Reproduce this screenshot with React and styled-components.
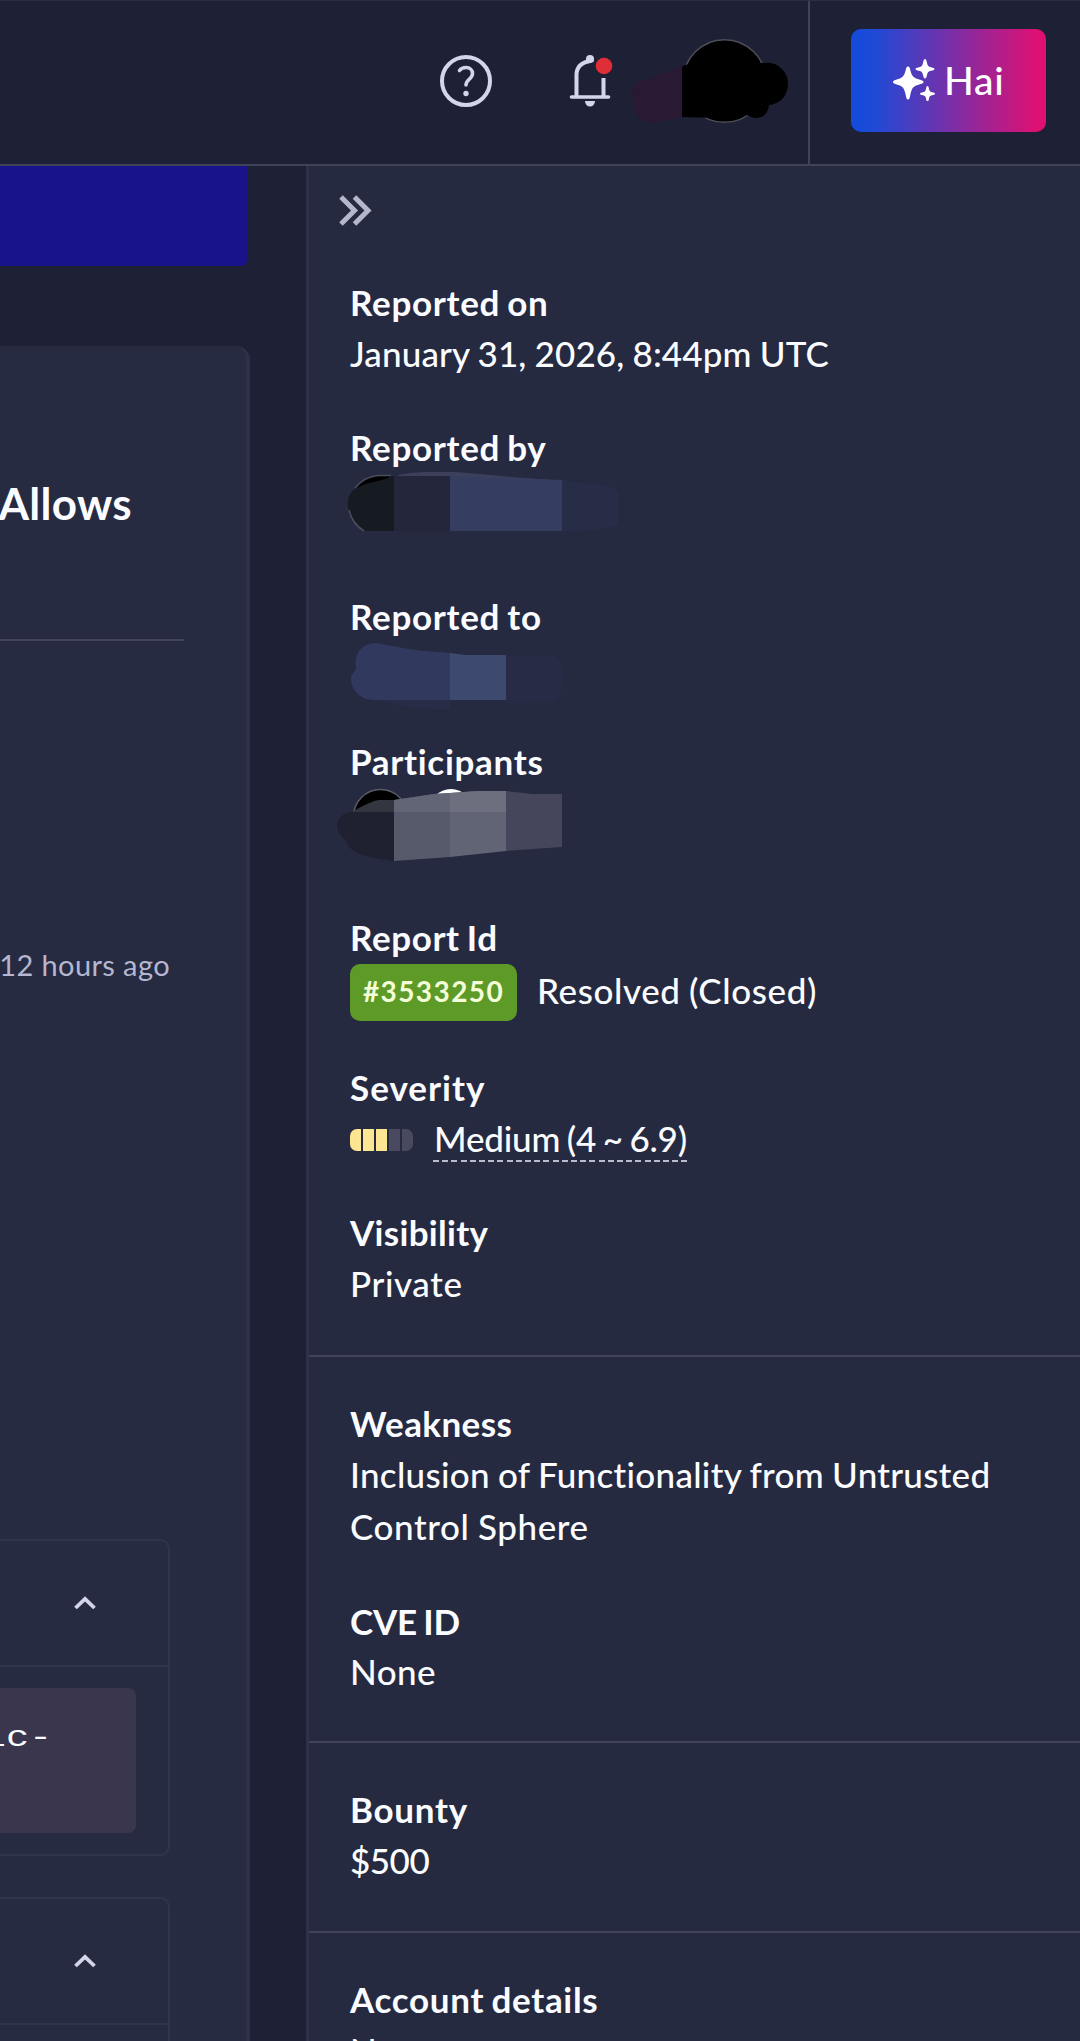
import React from 'react'
import styled, { createGlobalStyle } from 'styled-components'

export default function App() {
  return (
    <Page>
      <GlobalStyle />
      <Header>
        <HeaderIcons>
          <HelpIcon />
          <BellIcon />
          <HiddenAvatar />
        </HeaderIcons>
        <HaiWrap>
          <HaiButton>
            <Sparkles />
            <HaiLabel>Hai</HaiLabel>
          </HaiButton>
        </HaiWrap>
      </Header>
      <Body>
        <Main>
          <Banner />
          <Card>
            <Title>Allows</Title>
            <Rule />
            <Timestamp>12 hours ago</Timestamp>
            <Box>
              <BoxHeader><Caret /></BoxHeader>
              <BoxBody>
                <CodeBlock><Code>ic-</Code></CodeBlock>
              </BoxBody>
            </Box>
            <Box>
              <BoxHeader><Caret /></BoxHeader>
              <BoxBody />
            </Box>
          </Card>
        </Main>
        <Sidebar>
          <Toggle><DoubleChevron /></Toggle>
          <Section>
            <Field>
              <Label>Reported on</Label>
              <Value $ls="0.15px">January 31, 2026, 8:44pm UTC</Value>
            </Field>
            <Field $h="169px">
              <Label>Reported by</Label>
              <ReporterMask />
            </Field>
            <Field>
              <Label>Reported to</Label>
              <ProgramMask />
            </Field>
            <Field $h="176px">
              <Label>Participants</Label>
              <ParticipantsMask />
            </Field>
            <Field $h="150px">
              <Label $ls="0.6px">Report Id</Label>
              <Row>
                <Badge>#3533250</Badge>
                <Value $lh="48px">Resolved (Closed)</Value>
              </Row>
            </Field>
            <Field>
              <Label $ls="1px">Severity</Label>
              <Row>
                <Meter>
                  <Segment $on />
                  <Segment $on />
                  <Segment $on />
                  <Segment />
                  <Segment />
                </Meter>
                <Rating>Medium (4 ~ 6.9)</Rating>
              </Row>
            </Field>
            <Field>
              <Label $ls="0.3px">Visibility</Label>
              <Value>Private</Value>
            </Field>
          </Section>
          <Section>
            <Field $h="198px">
              <Label $ls="0.4px">Weakness</Label>
              <Value $ls="0.3px">Inclusion of Functionality from Untrusted</Value>
              <Value>Control Sphere</Value>
            </Field>
            <Field>
              <Label $ls="-0.2px">CVE ID</Label>
              <Value $ls="0.4px" $lh="50px">None</Value>
            </Field>
          </Section>
          <Section>
            <Field $h="147px">
              <Label>Bounty</Label>
              <Value $ls="-0.5px">$500</Value>
            </Field>
          </Section>
          <Section>
            <Field>
              <Label $ls="0.7px">Account details</Label>
              <Value>None</Value>
            </Field>
          </Section>
        </Sidebar>
      </Body>
    </Page>
  )
}

const HelpIcon = () => (
  <svg width="52" height="52" viewBox="0 0 52 52" fill="none" stroke="#d3d6ea" strokeWidth="4" strokeLinecap="round">
    <circle cx="26" cy="26" r="24" />
    <path d="M19.500 15.500C21 13.500 23.500 12.500 26 12.500C30 12.500 32.500 15 32.500 18.500C32.500 24 26 24.500 26 30" strokeWidth="3.600" />
    <circle cx="26" cy="38.500" r="2.700" fill="#d3d6ea" stroke="none" />
  </svg>
)

const BellIcon = () => (
  <svg width="46" height="54" viewBox="0 0 46 54" fill="none" stroke="#d3d6ea" strokeWidth="4" strokeLinecap="round">
    <circle cx="21" cy="5" r="4" fill="#d3d6ea" stroke="none" />
    <path d="M21 7C12.500 8.500 7.500 13.500 7.500 21V42" />
    <path d="M21 4V8" strokeWidth="7" strokeLinecap="butt" />
    <path d="M34.500 24V42" strokeLinecap="butt" />
    <path d="M2.500 43H39.500" strokeWidth="3.600" />
    <path d="M16 47H26A5 5.500 0 0 1 16 47Z" fill="#d3d6ea" stroke="none" />
    <circle cx="35" cy="12" r="8.300" fill="#e02e38" stroke="none" />
  </svg>
)

const HiddenAvatar = () => (
  <svg width="158" height="86" viewBox="0 0 158 86">
    <path d="M2 52C2 46 8 44 16 42L52 28V79L20 85C8 85 2 70 2 52Z" fill="#2a1933" />
    <circle cx="94.500" cy="43" r="41.300" fill="#000" stroke="#4c4d57" strokeWidth="1.500" />
    <path d="M52 29C55 26 58 27 62 25H135C146 23 158 33 158 45C158 57 151 66 139 67C138 76 132 80 127 80C121 80 117 76 112 76L90 80L52 79Z" fill="#000" />
  </svg>
)

const Sparkles = () => (
  <svg width="42" height="42" viewBox="0 0 42 42" fill="#fff">
    <path d="M15 7.500C16.500 7.500 16.800 9 17.400 11.500C19 17.500 20.500 19 27 20.700C29.500 21.300 30.500 21.800 30.500 23C30.500 24.200 29.500 24.700 27 25.300C20.500 27 19 28.500 17.400 35.500C16.800 38.500 16.500 40.500 15 40.500C13.500 40.500 13.200 38.500 12.600 35.500C11 28.500 9.500 27 3 25.300C1 24.700 0 24.200 0 23C0 21.800 1 21.300 3 20.700C9.500 19 11 17.500 12.600 11.500C13.200 9 13.500 7.500 15 7.500Z" />
    <path d="M32 0C33 0 33.500 1.500 34 4C34.600 6.800 35.500 7.600 38 8.200C40.500 8.800 41.500 9 41.500 10C41.500 11 40.500 11.200 38 11.800C35.500 12.400 34.600 13.200 34 16C33.500 18.500 33 19.500 32 19.500C31 19.500 30.500 18.500 30 16C29.400 13.200 28.500 12.400 26 11.800C23.500 11.200 22.500 11 22.500 10C22.500 9 23.500 8.800 26 8.200C28.500 7.600 29.400 6.800 30 4C30.500 1.500 31 0 32 0Z" />
    <path d="M34.500 27C35.500 27 35.700 28.500 36 30C36.500 32.200 37 32.700 39 33.200C40.800 33.600 42 33.800 42 34.700C42 35.600 40.800 35.800 39 36.200C37 36.700 36.500 37.200 36 39.400C35.700 41 35.500 42 34.500 42C33.500 42 33.300 41 33 39.400C32.500 37.200 32 36.700 30 36.200C28.200 35.800 27 35.600 27 34.700C27 33.800 28.200 33.600 30 33.200C32 32.700 32.500 32.200 33 30C33.300 28.500 33.500 27 34.500 27Z" />
  </svg>
)

const DoubleChevron = () => (
  <svg width="36" height="34" viewBox="0 0 36 34" fill="none" stroke="#b5b8cb" strokeWidth="5">
    <path d="M3 3L16.500 16.500L3 30" />
    <path d="M16.500 3L30 16.500L16.500 30" />
  </svg>
)

const Caret = () => (
  <svg width="22" height="14" viewBox="0 0 22 14" fill="none" stroke="#d3d6ea" strokeWidth="3.800">
    <path d="M1.500 12L11 2.800L20.500 12" />
  </svg>
)

const ReporterMask = () => (
  <Mask width="290" height="64" viewBox="0 4 290 64">
    <path d="M62 7C80 3 115 3 132 5L176 9L230 13V14H62Z" fill="#3c405a" />
    <path d="M57 8H114V63H57Z" fill="#24273b" />
    <path d="M114 8L174 10L226 12V63H114Z" fill="#353d61" />
    <path d="M226 13L264 16C274 19 283 22 283 24V58L250 63H226Z" fill="#272d47" />
    <path d="M58 8H42C30 9 24 14 19 21C13 25 12 30 12 36C12 44 14 52 27 63H58Z" fill="#161a21" />
    <path d="M54 8C40 7 28 11 21 20C33 13 45 14 54 9Z" fill="#000" />
    <path d="M55 7.500H42C30 8.500 24 14 19 20M13 42C15 51 20 58 28 63" fill="none" stroke="#4c4e5c" strokeWidth="1.500" />
  </Mask>
)

const ProgramMask = () => (
  <Mask width="240" height="72" viewBox="0 -2 240 72">
    <path d="M36 56H114V66C85 68 60 62 36 56Z" fill="#272d46" />
    <path d="M170 13H220C230 20 230 50 218 58L170 60Z" fill="#272b45" />
    <path d="M20 24C18 8 28 0 41 0C56 3 75 7 90 8L114 10V57H38C24 57 15 46 15 36C15 30 20 29 20 24Z" fill="#313a5e" />
    <path d="M114 10L130 12H170V57H114Z" fill="#3d496f" />
  </Mask>
)

const ParticipantsMask = () => (
  <Mask width="240" height="76" viewBox="0 -1 240 76">
    <circle cx="44.500" cy="29.500" r="27" fill="#000" stroke="#5a5b66" strokeWidth="1.500" />
    <circle cx="115" cy="24" r="22" fill="#fff" />
    <path d="M16 25C28 18 36 14 43 13H58V27H16Z" fill="#33353f" />
    <path d="M58 25H15C6 26 1 32 1 39C1 46 6 49 10 54C14 68 36 71 58 74Z" fill="#1f2130" />
    <path d="M58 13L98 7L114 6V70L58 74Z" fill="#565a6b" />
    <path d="M114 6L142 4H170V64L114 70Z" fill="#616475" />
    <path d="M58 13L98 7L114 6V25H58Z" fill="#626575" />
    <path d="M114 6L142 4H170V25H114Z" fill="#6d6f7e" />
    <path d="M170 4L196 7H226V60L170 64Z" fill="#45465c" />
  </Mask>
)

const GlobalStyle = createGlobalStyle`
body{
margin:0;
background:#1e2036;
color:#fbfcff;
font-family:Lato, "Open Sans", sans-serif;
}
*{
box-sizing:border-box;
}
svg{
display:block;
flex-shrink:0;
}
`;

const Page = styled.div`
width:1080px;
height:2041px;
overflow:hidden;
display:flex;
flex-direction:column;
`;

const Header = styled.header`
height:166px;
flex-shrink:0;
display:flex;
justify-content:flex-end;
border-top:1px solid #2d2f40;
border-bottom:2px solid #3f4259;
`;

const HeaderIcons = styled.div`
display:flex;
align-items:center;
padding:0 20px 4px 0;

svg:nth-child(1){
margin-right:77px;
}
svg:nth-child(2){
margin-right:15px;
}
`;

const HaiWrap = styled.div`
width:272px;
padding:28px 0 0 41px;
border-left:2px solid #3f4259;
`;

const HaiButton = styled.button`
width:195px;
height:103px;
display:flex;
align-items:center;
padding:0 0 1px 42px;
border:0;
border-radius:10px;
color:#fff;
font-family:inherit;
background:linear-gradient(90deg, #124bdb 0%, #1f4ad6 12%, #df1072 96%);
`;

const HaiLabel = styled.span`
margin-left:9px;
font-size:39px;
line-height:46px;
font-weight:500;
letter-spacing:0.800px;
`;

const Body = styled.div`
flex:1;
min-height:0;
display:flex;
`;

const Main = styled.main`
width:306px;
overflow:hidden;
`;

const Banner = styled.div`
width:247px;
height:100px;
margin-bottom:80px;
border-radius:0 0 6px 0;
background:#18128a;
`;

const Card = styled.section`
width:250px;
height:1800px;
padding-top:131px;
border-right:4px solid #2d3048;
border-radius:0 14px 0 0;
background:#262b42;
`;

const Title = styled.h1`
width:132px;
margin:0;
display:flex;
justify-content:flex-end;
font-size:44px;
line-height:52px;
font-weight:700;
letter-spacing:0.300px;
`;

const Rule = styled.div`
width:184px;
height:2px;
margin:110px 0 306px;
background:#42455d;
`;

const Timestamp = styled.div`
width:170px;
margin-bottom:556px;
display:flex;
justify-content:flex-end;
white-space:nowrap;
font-size:29px;
line-height:36px;
letter-spacing:0.400px;
color:#b4b7cf;
`;

const Box = styled.div`
width:170px;
margin-bottom:41px;
border:2px solid #31354c;
border-left:0;
border-radius:0 10px 10px 0;
`;

const BoxHeader = styled.div`
height:126px;
display:flex;
align-items:center;
justify-content:flex-end;
padding-right:72px;
border-bottom:2px solid #31354c;
`;

const BoxBody = styled.div`
height:187px;
padding:21px 32px 21px 0;
`;

const CodeBlock = styled.pre`
height:145px;
margin:0;
padding:33px 84px 0 0;
display:flex;
justify-content:flex-end;
border-radius:0 8px 8px 0;
background:#39364d;
`;

const Code = styled.code`
font-family:"Liberation Mono", monospace;
font-size:29px;
line-height:36px;
transform:scaleX(1.33);
transform-origin:right;
`;

const Sidebar = styled.aside`
flex:1;
overflow:hidden;
border-left:3px solid #2e3148;
background:#252a41;
`;

const Toggle = styled.div`
height:69px;
padding:28px 0 0 29px;
`;

const Section = styled.section`
padding:41px 0 4px 41px;

& + &{
padding:40px 0 1px 41px;
border-top:2px solid #41445b;
}
`;

const Field = styled.div`
height:${p => p.$h || '145px'};
`;

const Label = styled.div`
height:51px;
font-size:35px;
line-height:52px;
font-weight:700;
letter-spacing:${p => p.$ls || '0.7px'};
word-spacing:-2px;
white-space:nowrap;
`;

const Value = styled.div`
font-size:35px;
line-height:${p => p.$lh || '52px'};
font-weight:500;
letter-spacing:${p => p.$ls || '0.6px'};
word-spacing:-1px;
white-space:nowrap;
`;

const Row = styled.div`
display:flex;
align-items:flex-start;
`;

const Badge = styled.span`
width:167px;
height:57px;
margin:2px 20px 0 0;
display:flex;
justify-content:center;
border-radius:10px;
background:#5e9a28;
color:#f4ffd9;
font-size:28px;
line-height:54px;
font-weight:700;
letter-spacing:1.400px;

& + ${Value}{
margin-top:4px;
}
`;

const Meter = styled.div`
width:63px;
height:22px;
margin:17px 20px 0 0;
display:flex;
gap:2px;
border-radius:7px;
overflow:hidden;
`;

const Segment = styled.span`
flex:1;
background:${p => (p.$on ? '#fce692' : '#494a60')};
`;

const Rating = styled.span`
width:254px;
padding-left:1px;
font-size:35px;
line-height:52px;
font-weight:500;
letter-spacing:-0.200px;
word-spacing:-2px;
white-space:nowrap;
background:repeating-linear-gradient(90deg, #b9bccd 0 6px, transparent 6px 9.200px) 0 48px / 100% 2px no-repeat;
`;

const Mask = styled.svg`
margin-left:-14px;
`;
